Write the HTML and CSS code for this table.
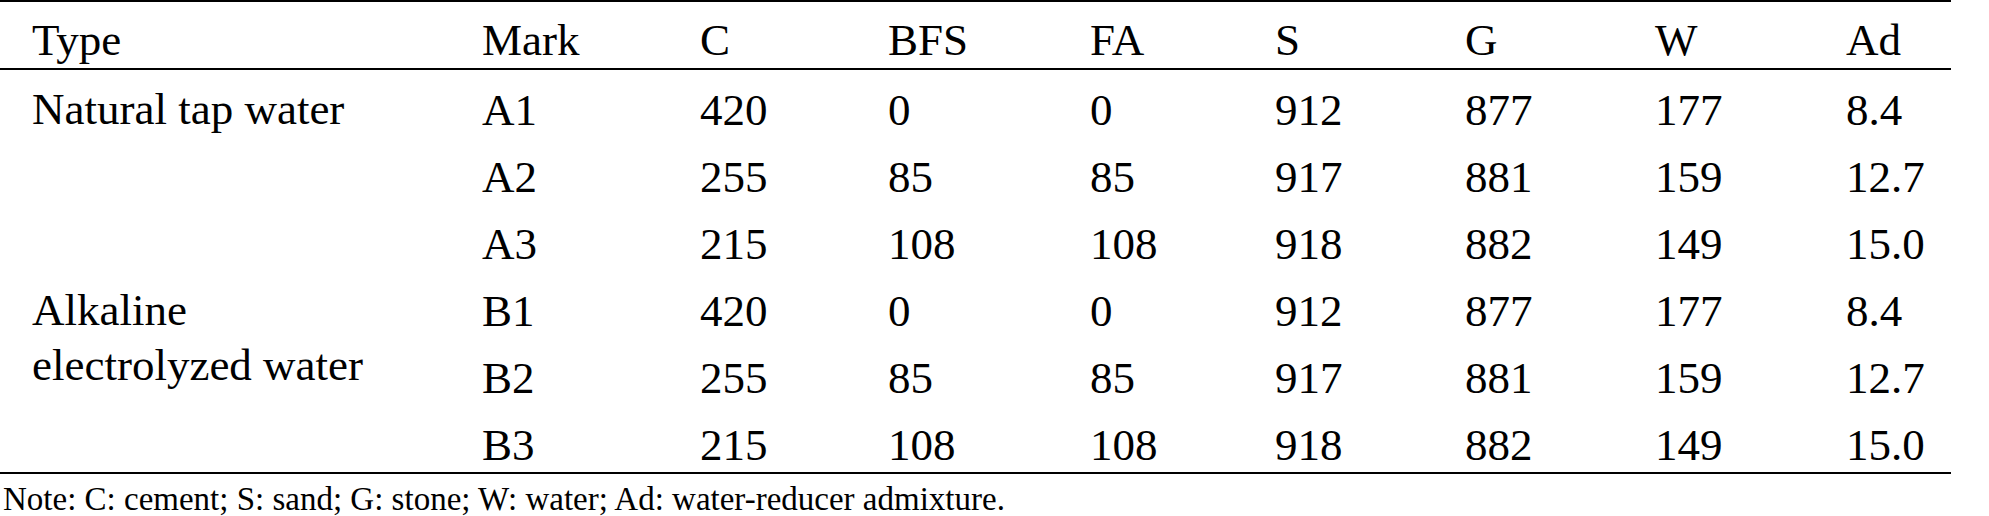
FILE: index.html
```html
<!DOCTYPE html>
<html lang="en">
<head>
    <meta charset="UTF-8">
    <title>Mix proportions</title>
    <link rel="stylesheet" href="styles.css">
</head>
<body>
    <div class="wrap">
        <table class="mix">
            <colgroup>
                <col class="c-type">
                <col class="c-mark">
                <col class="c-c">
                <col class="c-bfs">
                <col class="c-fa">
                <col class="c-s">
                <col class="c-g">
                <col class="c-w">
                <col class="c-ad">
            </colgroup>
            <thead>
                <tr>
                    <th class="type">Type</th>
                    <th>Mark</th>
                    <th>C</th>
                    <th>BFS</th>
                    <th>FA</th>
                    <th>S</th>
                    <th>G</th>
                    <th>W</th>
                    <th>Ad</th>
                </tr>
            </thead>
            <tbody>
                <tr>
                    <td class="type" rowspan="3">Natural tap water</td>
                    <td>A1</td><td>420</td><td>0</td><td>0</td><td>912</td><td>877</td><td>177</td><td>8.4</td>
                </tr>
                <tr>
                    <td>A2</td><td>255</td><td>85</td><td>85</td><td>917</td><td>881</td><td>159</td><td>12.7</td>
                </tr>
                <tr>
                    <td>A3</td><td>215</td><td>108</td><td>108</td><td>918</td><td>882</td><td>149</td><td>15.0</td>
                </tr>
                <tr>
                    <td class="type" rowspan="3">Alkaline<br>electrolyzed water</td>
                    <td>B1</td><td>420</td><td>0</td><td>0</td><td>912</td><td>877</td><td>177</td><td>8.4</td>
                </tr>
                <tr>
                    <td>B2</td><td>255</td><td>85</td><td>85</td><td>917</td><td>881</td><td>159</td><td>12.7</td>
                </tr>
                <tr>
                    <td>B3</td><td>215</td><td>108</td><td>108</td><td>918</td><td>882</td><td>149</td><td>15.0</td>
                </tr>
            </tbody>
        </table>
        <p class="note">Note: C: cement; S: sand; G: stone; W: water; Ad: water-reducer admixture.</p>
    </div>
</body>
</html>
```

FILE: styles.css
```css
* {
    padding: 0;
    margin: 0;
    box-sizing: border-box;
}
body {
    background: #fff;
    color: #000;
    font-family: "Liberation Serif", "Times New Roman", serif;
}
.wrap {
    width: 1951px;
}
.mix {
    width: 1951px;
    border-collapse: collapse;
    table-layout: fixed;
    font-size: 45px;
    border-top: 2px solid #000;
    border-bottom: 2px solid #000;
}
.c-type { width: 482px; }
.c-mark { width: 218px; }
.c-c { width: 188px; }
.c-bfs { width: 202px; }
.c-fa { width: 185px; }
.c-s { width: 190px; }
.c-g { width: 190px; }
.c-w { width: 191px; }
.c-ad { width: 105px; }

.mix th {
    font-weight: normal;
    text-align: left;
    line-height: 50px;
    padding: 13px 0 3px;
    border-bottom: 2px solid #000;
}
.mix td {
    text-align: left;
    vertical-align: top;
    line-height: 50px;
    padding: 15px 0 2px;
    white-space: nowrap;
}
.mix .type {
    padding-left: 32px;
}
.mix td.type {
    line-height: 55px;
    padding-top: 12px;
}
.note {
    font-size: 33px;
    line-height: 36px;
    margin-top: 7px;
    padding-left: 3px;
}
```
